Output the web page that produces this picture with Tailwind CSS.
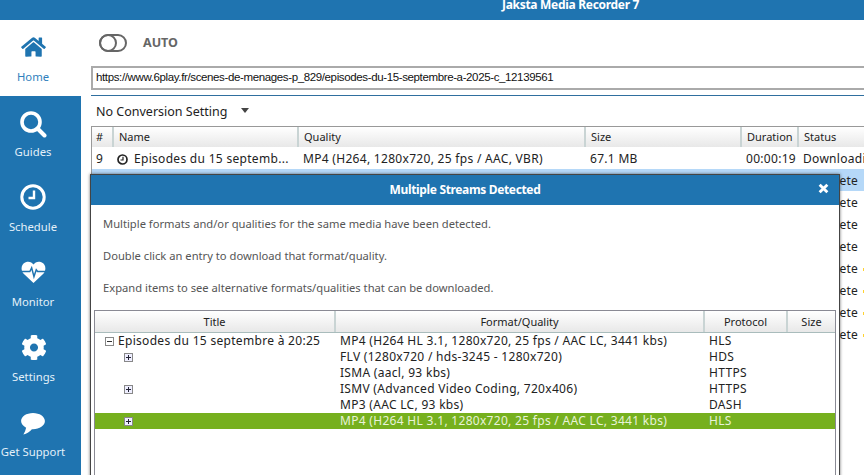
<!DOCTYPE html>
<html lang="en">
<head>
    <meta charset="UTF-8">
    <title>Jaksta Media Recorder 7</title>
    <script src="https://cdn.jsdelivr.net/npm/@tailwindcss/browser@4"></script>
</head>
<body class="w-[864px] h-[475px] overflow-hidden relative bg-white text-[#222] font-['Noto_Sans',sans-serif] text-[12px]">
    <!-- title bar -->
    <div class="h-5 bg-[#1f74b0] pl-[502px] text-white font-bold text-[12px] tracking-[-0.3px] leading-[10px] whitespace-nowrap">Jaksta Media Recorder 7</div>

    <div class="flex h-[455px]">
        <!-- sidebar -->
        <nav class="w-[81px] shrink-0 bg-[#1f74b0] flex flex-col text-[#e3f0f9] text-[11.3px]">
            <a class="h-[76px] bg-white text-[#2f7fbd] flex flex-col items-center pt-[16px] pr-[15px]">
                <svg class="w-[25px] h-[22px] fill-[#1f74b0]" viewBox="0 0 576 512"><path d="M280.37 148.26L96 300.11V464a16 16 0 0 0 16 16l112.06-.29a16 16 0 0 0 15.92-16V368a16 16 0 0 1 16-16h64a16 16 0 0 1 16 16v95.64a16 16 0 0 0 16 16.05L464 480a16 16 0 0 0 16-16V300L295.67 148.26a12.19 12.19 0 0 0-15.3 0zM571.6 251.47L488 182.56V44.05a12 12 0 0 0-12-12h-56a12 12 0 0 0-12 12v72.61L318.47 43a48 48 0 0 0-61 0L4.34 251.47a12 12 0 0 0-1.6 16.9l25.5 31A12 12 0 0 0 45.15 301l235.22-193.74a12.19 12.19 0 0 1 15.3 0L530.9 301a12 12 0 0 0 16.9-1.6l25.5-31a12 12 0 0 0-1.7-16.93z"/></svg>
                <span class="mt-[11px] leading-[16px]">Home</span>
            </a>
            <a class="h-[75px] flex flex-col items-center pt-[14px] pr-[15px]">
                <svg class="w-[28px] h-[28px] fill-none stroke-white" viewBox="0 0 28 28"><circle cx="12" cy="12" r="9" stroke-width="3.6"/><path d="M18.5 18.5L25.5 25.5" stroke-width="4" stroke-linecap="round"/></svg>
                <span class="mt-[6px] leading-[16px]">Guides</span>
            </a>
            <a class="h-[75px] flex flex-col items-center pt-[13px] pr-[15px]">
                <svg class="w-[26px] h-[26px] fill-none stroke-white" viewBox="0 0 26 26"><circle cx="13" cy="13" r="11.2" stroke-width="3"/><path d="M14 6.5V14H8.5" stroke-width="2.4"/></svg>
                <span class="mt-[9px] leading-[16px]">Schedule</span>
            </a>
            <a class="h-[75px] flex flex-col items-center pt-[15px] pr-[15px]">
                <svg class="w-[27px] h-[22px]" viewBox="0 0 27 24"><path class="fill-white" d="M13.5 24L2.5 13.5C-1 9.5 0 2 6.5.8c3-.5 5.5.8 7 3 1.500-2.200 4-3.500 7-3C27 2 28 9.500 24.500 13.500z"/><path class="fill-none stroke-[#1f74b0]" stroke-width="1.6" d="M0 11.500H9.500L11.500 7.500L14 17L16.500 9.500L18 11.500H27"/></svg>
                <span class="mt-[11px] leading-[16px]">Monitor</span>
            </a>
            <a class="h-[75px] flex flex-col items-center pt-[13px] pr-[14px]">
                <svg class="w-[26px] h-[27px] fill-white" viewBox="0 0 512 512"><path d="M487.4 315.7l-42.6-24.6c4.3-23.2 4.3-47 0-70.2l42.6-24.6c4.9-2.8 7.1-8.6 5.5-14-11.1-35.6-30-67.8-54.7-94.6-3.8-4.1-10-5.1-14.8-2.3L380.8 110c-17.9-15.4-38.5-27.3-60.8-35.1V25.8c0-5.6-3.9-10.5-9.4-11.7-36.7-8.2-74.3-7.8-109.2 0-5.5 1.2-9.4 6.1-9.4 11.7V75c-22.2 7.9-42.8 19.8-60.8 35.1L88.7 85.5c-4.9-2.8-11-1.9-14.8 2.3-24.7 26.7-43.6 58.9-54.7 94.6-1.7 5.4.6 11.2 5.5 14L67.3 221c-4.3 23.2-4.3 47 0 70.2l-42.6 24.6c-4.9 2.8-7.1 8.6-5.5 14 11.1 35.6 30 67.8 54.7 94.6 3.8 4.1 10 5.1 14.8 2.3l42.6-24.6c17.9 15.4 38.5 27.3 60.8 35.1v49.2c0 5.6 3.9 10.5 9.4 11.7 36.7 8.2 74.3 7.8 109.2 0 5.5-1.2 9.4-6.1 9.4-11.7v-49.2c22.2-7.9 42.8-19.8 60.8-35.1l42.6 24.6c4.9 2.8 11 1.9 14.8-2.3 24.7-26.7 43.6-58.9 54.7-94.6 1.5-5.500-.7-11.300-5.600-14.100zM256 336c-44.100 0-80-35.900-80-80s35.900-80 80-80 80 35.900 80 80-35.900 80-80 80z"/></svg>
                <span class="mt-[8px] leading-[16px]">Settings</span>
            </a>
            <a class="h-[75px] flex flex-col items-center pt-[17px] pr-[15px]">
                <svg class="w-[26px] h-[22px] fill-white" viewBox="0 0 26 24"><path d="M13 0C5.800 0 0 3.900 0 8.800c0 3 2.200 5.600 5.500 7.200C5 18.500 4 21 2.500 23.500c3.800-1 7-3 9.300-5.900h1.200c7.200 0 13-3.900 13-8.800S20.200 0 13 0z"/></svg>
                <span class="mt-[9px] leading-[16px] whitespace-nowrap">Get Support</span>
            </a>
        </nav>

        <!-- main -->
        <main class="flex-1 min-w-0 pl-[10px] flex flex-col">
            <div class="h-[46px] flex items-center pl-[8px] pb-[1px]">
                <span class="w-[28px] h-[18px] rounded-full border-2 border-[#666] relative block">
                    <span class="absolute left-[-2px] top-[-2px] w-[18px] h-[18px] rounded-full border-2 border-[#666]"></span>
                </span>
                <span class="ml-[16px] mt-[2px] font-bold text-[#666] text-[12.5px]">AUTO</span>
            </div>
            <div class="h-[24px] w-[790px] shrink-0 border-2 border-[#aaa] flex items-center pl-[3px] whitespace-nowrap font-['Liberation_Sans',sans-serif] text-[11.5px] tracking-[-0.37px] text-[#111]">https://www.6play.fr/scenes-de-menages-p_829/episodes-du-15-septembre-a-2025-c_12139561</div>
            <div class="mt-[5px] border-t border-[#2f6f9f] h-[31px] flex items-center pl-[5px] pt-[2px] text-[12.5px] text-[#222]">
                No Conversion Setting
                <span class="ml-[14px] mb-[3px] w-0 h-0 border-x-[4.500px] border-x-transparent border-t-[5px] border-t-[#444]"></span>
            </div>
            <!-- downloads table -->
            <div class="border-t border-l border-[#999] w-[780px] shrink-0">
                <div class="grid grid-cols-[22px_185px_287px_156px_57px_73px] h-[20px] border-b border-[#a9bcbc] text-[11px]">
                    <div class="bg-gradient-to-b from-white to-[#e8e8e8] border-r-2 border-[#c9d4d4] pl-[4px] leading-[20px]">#</div>
                    <div class="bg-gradient-to-b from-white to-[#e8e8e8] border-r-2 border-[#c9d4d4] pl-[5px] leading-[20px]">Name</div>
                    <div class="bg-gradient-to-b from-white to-[#e8e8e8] border-r-2 border-[#c9d4d4] pl-[5px] leading-[20px]">Quality</div>
                    <div class="bg-gradient-to-b from-white to-[#e8e8e8] border-r-2 border-[#c9d4d4] pl-[5px] leading-[20px]">Size</div>
                    <div class="bg-gradient-to-b from-white to-[#e8e8e8] border-r-2 border-[#c9d4d4] pl-[5px] leading-[20px]">Duration</div>
                    <div class="bg-gradient-to-b from-white to-[#e8e8e8] pl-[5px] leading-[20px]">Status</div>
                </div>
                <div class="grid grid-cols-[22px_185px_287px_156px_57px_73px] h-[22px] pt-[2px] items-center whitespace-nowrap tracking-[0.3px]">
                    <div class="pl-[4px]">9</div>
                    <div class="pl-[3px] flex items-center gap-[6px]">
                        <svg class="w-[11px] h-[11px] fill-none stroke-[#222]" viewBox="0 0 11 11"><circle cx="5.500" cy="5.500" r="4.500" stroke-width="1.700"/><path d="M6 2.800V6H3.500" stroke-width="1.200"/></svg>
                        <span>Episodes du 15 septemb...</span>
                    </div>
                    <div class="pl-[4px]">MP4 (H264, 1280x720, 25 fps / AAC, VBR)</div>
                    <div class="pl-[4px]">67.1 MB</div>
                    <div class="pl-[4px]">00:00:19</div>
                    <div class="pl-[4px]">Downloading</div>
                </div>
                <div class="h-[22px] bg-[#b5d8f8] pl-[710px] leading-[24px] tracking-[0.2px]">Complete</div>
                <div class="h-[22px] pl-[710px] leading-[24px] tracking-[0.2px]">Complete</div>
                <div class="h-[22px] pl-[710px] leading-[24px] tracking-[0.2px]">Complete</div>
                <div class="h-[22px] pl-[710px] leading-[24px] tracking-[0.2px]">Complete</div>
                <div class="h-[22px] pl-[710px] leading-[24px] tracking-[0.2px] whitespace-nowrap">Complete<span class="inline-block ml-[5px] w-[3px] h-[3px] bg-amber-300 align-middle"></span></div>
                <div class="h-[22px] pl-[710px] leading-[24px] tracking-[0.2px] whitespace-nowrap">Complete<span class="inline-block ml-[5px] w-[3px] h-[3px] bg-amber-300 align-middle"></span></div>
                <div class="h-[22px] pl-[710px] leading-[24px] tracking-[0.2px] whitespace-nowrap">Complete<span class="inline-block ml-[5px] w-[3px] h-[3px] bg-amber-300 align-middle"></span></div>
                <div class="h-[22px] pl-[710px] leading-[24px] tracking-[0.2px] whitespace-nowrap">Complete<span class="inline-block ml-[5px] w-[3px] h-[3px] bg-amber-300 align-middle"></span></div>
            </div>
        </main>
    </div>

    <!-- dialog on top of the list -->
    <div class="absolute left-[90px] top-[174px] w-[750px] h-[310px] bg-white border border-[#444] shadow-[0_0_3px_rgba(0,0,0,0.55)] flex flex-col">
        <div class="h-[30px] shrink-0 bg-[#1f74b0] relative flex items-center justify-center text-white font-bold text-[12px] tracking-[-0.35px]">
            Multiple Streams Detected
            <svg class="absolute right-[10px] top-[8px] w-[11px] h-[11px] stroke-white" viewBox="0 0 10 10"><path d="M1.500 1.500L8.500 8.500M8.500 1.500L1.500 8.500" stroke-width="2.600"/></svg>
        </div>
        <div class="pl-[12px] pt-[11px] text-[#555] text-[11.2px] leading-[16px]">
            <p>Multiple formats and/or qualities for the same media have been detected.</p>
            <p class="mt-[16px]">Double click an entry to download that format/quality.</p>
            <p class="mt-[16px]">Expand items to see alternative formats/qualities that can be downloaded.</p>
        </div>
        <!-- streams tree -->
        <div class="ml-[3px] mt-[14px] w-[742px] flex-1 border border-[#8a8a94]">
            <div class="grid grid-cols-[241px_369px_83px_47px] h-[22px] border-b border-[#a9bcbc] text-center text-[#222] text-[11px] leading-[21px]">
                <div class="bg-gradient-to-b from-white to-[#e8e8e8] border-r-2 border-[#c9d4d4]">Title</div>
                <div class="bg-gradient-to-b from-white to-[#e8e8e8] border-r-2 border-[#c9d4d4]">Format/Quality</div>
                <div class="bg-gradient-to-b from-white to-[#e8e8e8] border-r-2 border-[#c9d4d4]">Protocol</div>
                <div class="bg-gradient-to-b from-white to-[#e8e8e8]">Size</div>
            </div>
            <div class="grid grid-cols-[241px_369px_83px_47px] h-4 items-center whitespace-nowrap leading-4 tracking-[0.3px]">
                <div class="pl-[10px] flex items-center gap-[4px]">
                    <span class="w-[9px] h-[9px] border border-[#888] bg-white relative block"><span class="absolute left-[1px] top-[3px] w-[5px] h-px bg-[#333]"></span></span>
                    <span>Episodes du 15 septembre à 20:25</span>
                </div>
                <div class="pl-[4px]">MP4 (H264 HL 3.1, 1280x720, 25 fps / AAC LC, 3441 kbs)</div>
                <div class="pl-[4px]">HLS</div>
                <div></div>
            </div>
            <div class="grid grid-cols-[241px_369px_83px_47px] h-4 items-center whitespace-nowrap leading-4 tracking-[0.3px]">
                <div class="pl-[29px]"><span class="w-[9px] h-[9px] border border-[#888] bg-[#eef] relative block"><span class="absolute left-[1px] top-[3px] w-[5px] h-px bg-[#223]"></span><span class="absolute left-[3px] top-[1px] w-px h-[5px] bg-[#223]"></span></span></div>
                <div class="pl-[4px]">FLV (1280x720 / hds-3245 - 1280x720)</div>
                <div class="pl-[4px]">HDS</div>
                <div></div>
            </div>
            <div class="grid grid-cols-[241px_369px_83px_47px] h-4 items-center whitespace-nowrap leading-4 tracking-[0.3px]">
                <div></div>
                <div class="pl-[4px]">ISMA (aacl, 93 kbs)</div>
                <div class="pl-[4px]">HTTPS</div>
                <div></div>
            </div>
            <div class="grid grid-cols-[241px_369px_83px_47px] h-4 items-center whitespace-nowrap leading-4 tracking-[0.3px]">
                <div class="pl-[29px]"><span class="w-[9px] h-[9px] border border-[#888] bg-[#eef] relative block"><span class="absolute left-[1px] top-[3px] w-[5px] h-px bg-[#223]"></span><span class="absolute left-[3px] top-[1px] w-px h-[5px] bg-[#223]"></span></span></div>
                <div class="pl-[4px]">ISMV (Advanced Video Coding, 720x406)</div>
                <div class="pl-[4px]">HTTPS</div>
                <div></div>
            </div>
            <div class="grid grid-cols-[241px_369px_83px_47px] h-4 items-center whitespace-nowrap leading-4 tracking-[0.3px]">
                <div></div>
                <div class="pl-[4px]">MP3 (AAC LC, 93 kbs)</div>
                <div class="pl-[4px]">DASH</div>
                <div></div>
            </div>
            <div class="grid grid-cols-[241px_369px_83px_47px] h-4 items-center whitespace-nowrap leading-4 tracking-[0.3px] bg-[#76b01e] text-[#e8f3d8]">
                <div class="pl-[29px]"><span class="w-[9px] h-[9px] border border-[#888] bg-[#eef] relative block"><span class="absolute left-[1px] top-[3px] w-[5px] h-px bg-[#223]"></span><span class="absolute left-[3px] top-[1px] w-px h-[5px] bg-[#223]"></span></span></div>
                <div class="pl-[4px]">MP4 (H264 HL 3.1, 1280x720, 25 fps / AAC LC, 3441 kbs)</div>
                <div class="pl-[4px]">HLS</div>
                <div></div>
            </div>
        </div>
    </div>
</body>
</html>
